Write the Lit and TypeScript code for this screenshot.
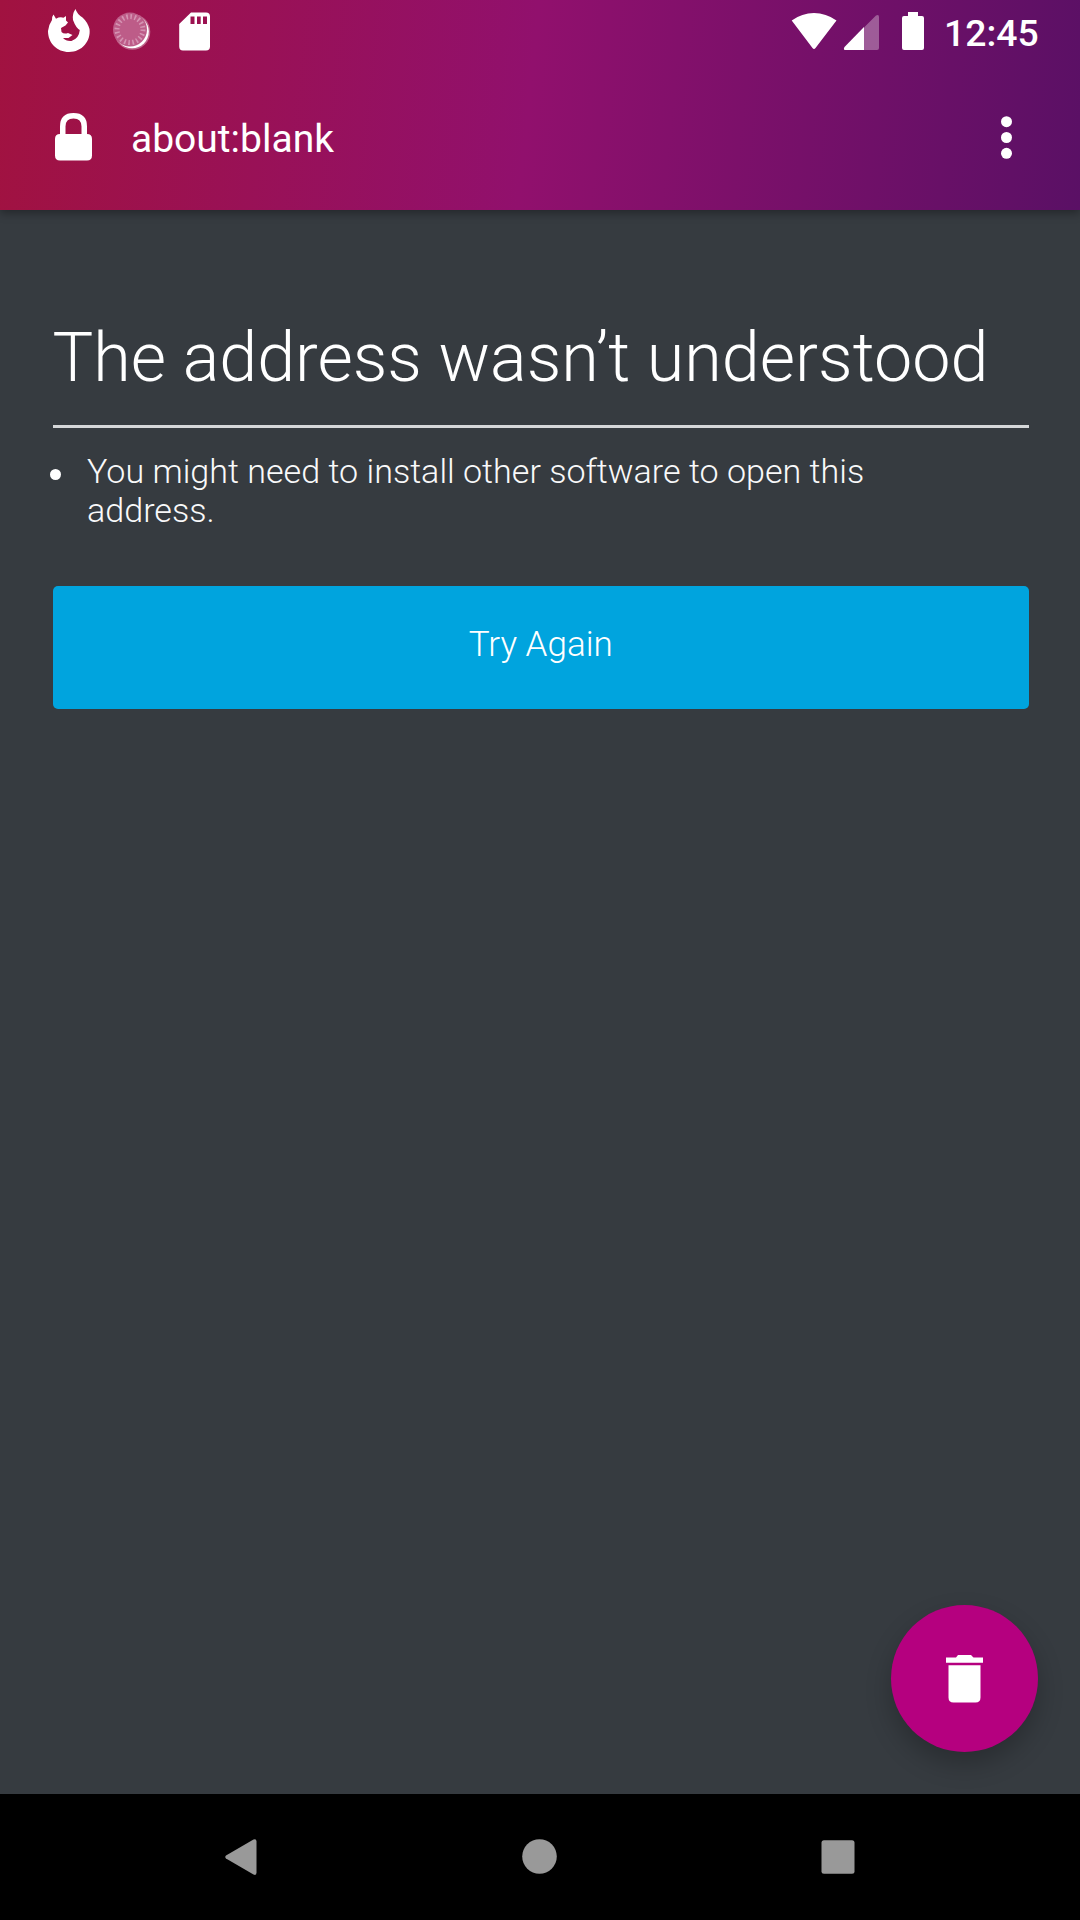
import { LitElement, html, css } from "lit";
import { customElement } from "lit/decorators.js";

@customElement("app-root")
export class AppRoot extends LitElement {
  static styles = css`
    :host {
      display: flex;
      flex-direction: column;
      width: 1080px;
      height: 1920px;
      overflow: hidden;
      background: #363b40;
      color: #fff;
      font-family: Roboto, "Liberation Sans", sans-serif;
    }
    * { box-sizing: border-box; }
    svg { display: block; fill: #fff; }
    .header {
      height: 210px;
      flex: none;
      z-index: 1;
      background: linear-gradient(96deg, #a11240 0%, #91106d 49%, #5a1065 100%);
      box-shadow: 0 3px 9px rgba(0, 0, 0, 0.35);
    }
    .status {
      height: 63px;
      display: flex;
      justify-content: space-between;
    }
    .clock {
      font-size: 37.3px;
      line-height: 44px;
      font-weight: 500;
      padding-top: 11px;
      width: 136px;
      white-space: nowrap;
    }
    .right { display: flex; }
    .bar {
      height: 147px;
      display: flex;
      align-items: flex-start;
    }
    .url {
      flex: 1;
      font-size: 39px;
      line-height: 48px;
      padding-top: 52px;
      padding-left: 11px;
    }
    .content {
      flex: 1;
      display: flex;
      flex-direction: column;
      padding: 107px 51px 0 52.5px;
      font-weight: 300;
    }
    .title {
      margin: 0;
      height: 111px;
      font-size: 68.25px;
      line-height: 82px;
      font-weight: 300;
      white-space: nowrap;
      border-bottom: 3px solid #d5d7d9;
    }
    .list {
      list-style: none;
      margin: 0;
      padding: 24px 0 0;
      height: 157.5px;
    }
    .item {
      display: flex;
      font-size: 34.1px;
      line-height: 39px;
      color: #f9f9fa;
    }
    .bullet { margin: 17px 26px 0 -2.5px; width: 11px; height: 11px; border-radius: 50%; background: #fff; }
    .text { width: 820px; }
    .retry {
      height: 123px;
      border: 0;
      padding: 0 0 4px;
      border-radius: 5px;
      background: #00a4de;
      color: #fff;
      font: 300 35px/42px Roboto, "Liberation Sans", sans-serif;
    }
    .fab {
      position: absolute;
      left: 891px;
      top: 1605px;
      width: 147px;
      height: 147px;
      border: 0;
      padding: 0;
      border-radius: 50%;
      background: #b5007f;
      box-shadow: 0 12px 26px rgba(0, 0, 0, 0.24);
    }
    .nav { height: 126px; flex: none; background: #000; }
    .nav svg { fill: #999; }
  `;

  render() {
    return html`
      <header class="header">
        <div class="status">
          <svg width="230" height="63" viewBox="0 0 230 63">
            <path d="M53.500 14.500L56 18.800Q60 16.500 63.500 17.800L66 16L66 20.500L68 22.500L65.500 25.500L61 28L61.500 32Q64 34.500 68 33L72.500 35L68.500 38L63 38Q66 41.500 71.500 41Q79 38.500 79.800 30Q76 28 73 20Q72 14 75.500 9Q77 14 82.500 17.500Q87.500 22 89.500 29C91 41 82 52 69 52C57 52 48 43 48 31Q48.500 25 52 20Q51.500 17 53.500 14.500Z"/>
            <circle cx="132.300" cy="31.800" r="18" opacity=".35"/>
            <circle cx="132.100" cy="31.600" r="16.700"/>
            <circle cx="130" cy="29.600" r="17" fill="#bd5c88"/>
            <circle cx="130" cy="29.600" r="13" fill="none" stroke="#d594b3" stroke-width="5" stroke-dasharray="1.600 2.484"/>
            <path fill-rule="evenodd" d="M191 12.500H206Q210 12.500 210 16.500V46.500Q210 50.500 206 50.500H183Q179.200 50.500 179.200 46.500V24ZM190.500 16.500V24H194.500V16.500ZM197 16.500V24H200.700V16.500ZM203 16.500V24H207V16.500Z"/>
          </svg>
          <div class="right">
            <svg width="164" height="63" viewBox="780 0 164 63">
              <path d="M791.700 20.500Q802 13 814 13Q826 13 836.500 20.500L815.500 48Q814 50 812.500 48Z"/>
              <path opacity=".32" d="M864 27.500L876 15.500Q879 14 879 17V48Q879 50 877 50H864Z"/>
              <path d="M864 27V50H845Q843 49.500 844.500 47Z"/>
              <path d="M908 12H918V16H922Q924 16 924 18V48Q924 50 922 50H904Q902 50 902 48V18Q902 16 904 16H908Z"/>
            </svg>
            <div class="clock">12:45</div>
          </div>
        </div>
        <div class="bar">
          <svg width="120" height="147" viewBox="0 63 120 147">
            <path fill-rule="evenodd" d="M60 134V126.500Q60 113 73.500 113Q87 113 87 126.500V134Q92 134 92 139V155.500Q92 160.500 87 160.500H60Q55 160.500 55 155.500V139Q55 134 60 134ZM65.500 134H81.500V126.500Q81.500 118.500 73.500 118.500Q65.500 118.500 65.500 126.500Z"/>
          </svg>
          <div class="url">about:blank</div>
          <svg width="140" height="147" viewBox="940 63 140 147">
            <circle cx="1006.500" cy="121.700" r="5.500"/>
            <circle cx="1006.500" cy="137.500" r="5.500"/>
            <circle cx="1006.500" cy="153.300" r="5.500"/>
          </svg>
        </div>
      </header>
      <main class="content">
        <h1 class="title">The address wasn’t understood</h1>
        <ul class="list">
          <li class="item"><span class="bullet"></span><span class="text">You might need to install other software to open this address.</span></li>
        </ul>
        <button class="retry">Try Again</button>
      </main>
      <button class="fab" aria-label="Erase">
        <svg width="147" height="147" viewBox="891 1605 147 147">
          <path d="M946 1657.500H956L958 1655H971L973.500 1657.500H983V1662.700H946ZM948.500 1665.200H980.500V1697.500Q980.500 1702.500 975.500 1702.500H953.500Q948.500 1702.500 948.500 1697.500Z"/>
        </svg>
      </button>
      <nav class="nav">
        <svg width="1080" height="126" viewBox="0 1794 1080 126">
          <path d="M226 1855.500L253.500 1839.500Q256.500 1838.500 256.500 1841.500V1872.500Q256.500 1876 253.500 1874.500L226 1858.500Q224.500 1857 226 1855.500Z"/>
          <circle cx="539.500" cy="1856.500" r="17.300"/>
          <rect x="821.500" y="1840.300" width="33" height="33.400" rx="2.500"/>
        </svg>
      </nav>
    `;
  }
}
